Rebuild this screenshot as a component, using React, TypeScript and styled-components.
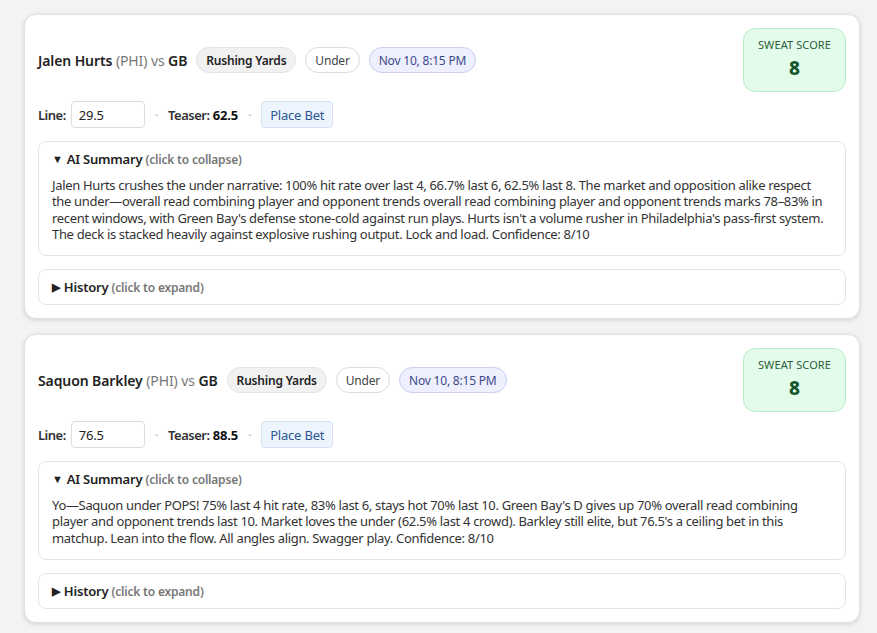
import React from "react";
import styled, { createGlobalStyle } from "styled-components";

const Global = createGlobalStyle`
  html, body { margin: 0; padding: 0; background: #f3f3f3; }
  body { font-family: "Noto Sans", "Open Sans", sans-serif; color: #222; }
  * { box-sizing: border-box; }
`;

const Page = styled.div`
  display: flex;
  flex-direction: column;
  gap: 15px;
  padding: 14px 17px 14px 24px;
`;

const Card = styled.div`
  background: #fff;
  border: 1px solid #e2e2e2;
  border-radius: 12px;
  box-shadow: 0 1px 4px rgba(0, 0, 0, 0.14);
  padding: 13px;
  display: flex;
  flex-direction: column;
`;

const Header = styled.div`
  display: flex;
  align-items: center;
  justify-content: space-between;
`;

const TitleRow = styled.div`
  display: flex;
  align-items: center;
  gap: 9px;
`;

const Title = styled.div`
  font-size: 14px;
  font-weight: 600;
  color: #222;
  white-space: nowrap;
  letter-spacing: -0.1px;
`;

const Muted = styled.span`
  color: #777;
  font-weight: 400;
`;

const Pill = styled.span<{ $variant: "gray" | "white" | "blue" }>`
  display: inline-flex;
  align-items: center;
  height: 26px;
  padding: 0 9px;
  border-radius: 13px;
  font-size: 12px;
  letter-spacing: -0.2px;
  white-space: nowrap;
  font-weight: ${(p) => (p.$variant === "gray" ? 600 : 400)};
  background: ${(p) =>
    p.$variant === "gray" ? "#f1f1f2" : p.$variant === "blue" ? "#eef0fd" : "#fff"};
  border: 1px solid
    ${(p) =>
      p.$variant === "gray" ? "#e4e4e6" : p.$variant === "blue" ? "#c9cff3" : "#dcdcdc"};
  color: ${(p) => (p.$variant === "blue" ? "#3d4a8a" : p.$variant === "white" ? "#444" : "#222")};
`;

const Score = styled.div`
  width: 103px;
  height: 64px;
  border-radius: 12px;
  background: #e3fbea;
  border: 1px solid #b8efc9;
  display: flex;
  flex-direction: column;
  align-items: center;
  justify-content: flex-start;
  padding-top: 9px;
  gap: 5px;
`;

const ScoreLabel = styled.div`
  font-size: 11px;
  line-height: 14px;
  color: #2c5e3c;
  letter-spacing: 0.1px;
`;

const ScoreValue = styled.div`
  font-size: 19px;
  font-weight: 800;
  color: #16572c;
  line-height: 22px;
`;

const BetRow = styled.div`
  display: flex;
  align-items: center;
  gap: 8px;
  margin-top: 9px;
  font-size: 13px;
  letter-spacing: -0.2px;
`;

const Label = styled.span`
  font-weight: 600;
  color: #333;
  letter-spacing: -0.5px;
`;

const LineInput = styled.input`
  width: 74px;
  height: 27px;
  border: 1px solid #dcdcdc;
  border-radius: 4px;
  padding: 0 7px;
  font-family: inherit;
  font-size: 13px;
  letter-spacing: -0.2px;
  color: #222;
  margin-left: -3px;
`;

const Dot = styled.span`
  color: #bbb;
  margin: 0 2px;
`;

const Strong = styled.b`
  font-weight: 700;
  color: #111;
`;

const BetButton = styled.button`
  height: 27px;
  padding: 0 8px;
  border-radius: 4px;
  background: #eef4fd;
  border: 1px solid #d3e2f6;
  color: #2c5693;
  font-family: inherit;
  font-size: 13px;
  letter-spacing: -0.2px;
`;

const Section = styled.div<{ $open?: boolean }>`
  border: 1px solid #e3e3e3;
  border-radius: 8px;
  padding: ${(p) => (p.$open ? "8px 13px 13px" : "8px 13px 7px")};
  margin-top: 13px;
`;

const SectionHead = styled.div`
  font-size: 13px;
  font-weight: 600;
  color: #222;
  line-height: 18px;
  letter-spacing: -0.2px;
`;

const Arrow = styled.span`
  font-size: 11px;
  margin-right: 4px;
  position: relative;
  top: -1px;
`;

const Hint = styled.span`
  font-size: 12px;
  color: #777;
  font-weight: 600;
`;

const Body = styled.p`
  margin: 8px 0 0;
  font-size: 13px;
  line-height: 16.3px;
  letter-spacing: -0.33px;
  color: #333;
`;

type Bet = {
  name: string;
  line: string;
  teaser: string;
  summary: string;
};

const bets: Bet[] = [
  {
    name: "Jalen Hurts",
    line: "29.5",
    teaser: "62.5",
    summary:
      "Jalen Hurts crushes the under narrative: 100% hit rate over last 4, 66.7% last 6, 62.5% last 8. The market and opposition alike respect the under\u2014overall read combining player and opponent trends overall read combining player and opponent trends marks 78\u201383% in recent windows, with Green Bay's defense stone-cold against run plays. Hurts isn't a volume rusher in Philadelphia's pass-first system. The deck is stacked heavily against explosive rushing output. Lock and load. Confidence: 8/10",
  },
  {
    name: "Saquon Barkley",
    line: "76.5",
    teaser: "88.5",
    summary:
      "Yo\u2014Saquon under POPS! 75% last 4 hit rate, 83% last 6, stays hot 70% last 10. Green Bay's D gives up 70% overall read combining player and opponent trends last 10. Market loves the under (62.5% last 4 crowd). Barkley still elite, but 76.5's a ceiling bet in this matchup. Lean into the flow. All angles align. Swagger play. Confidence: 8/10",
  },
];

function BetCard({ bet }: { bet: Bet }) {
  return (
    <Card>
      <Header>
        <TitleRow>
          <Title>
            {bet.name} <Muted>(PHI) vs</Muted> GB
          </Title>
          <Pill $variant="gray">Rushing Yards</Pill>
          <Pill $variant="white">Under</Pill>
          <Pill $variant="blue">Nov 10, 8:15 PM</Pill>
        </TitleRow>
        <Score>
          <ScoreLabel>SWEAT SCORE</ScoreLabel>
          <ScoreValue>8</ScoreValue>
        </Score>
      </Header>
      <BetRow>
        <Label>Line:</Label>
        <LineInput defaultValue={bet.line} />
        <Dot>·</Dot>
        <span>
          <Label>Teaser:</Label> <Strong>{bet.teaser}</Strong>
        </span>
        <Dot>·</Dot>
        <BetButton>Place Bet</BetButton>
      </BetRow>
      <Section $open>
        <SectionHead>
          <Arrow>▼</Arrow>AI Summary <Hint>(click to collapse)</Hint>
        </SectionHead>
        <Body>{bet.summary}</Body>
      </Section>
      <Section>
        <SectionHead>
          <Arrow>▶</Arrow>History <Hint>(click to expand)</Hint>
        </SectionHead>
      </Section>
    </Card>
  );
}

export default function App() {
  return (
    <>
      <Global />
      <Page>
        {bets.map((b) => (
          <BetCard key={b.name} bet={b} />
        ))}
      </Page>
    </>
  );
}
